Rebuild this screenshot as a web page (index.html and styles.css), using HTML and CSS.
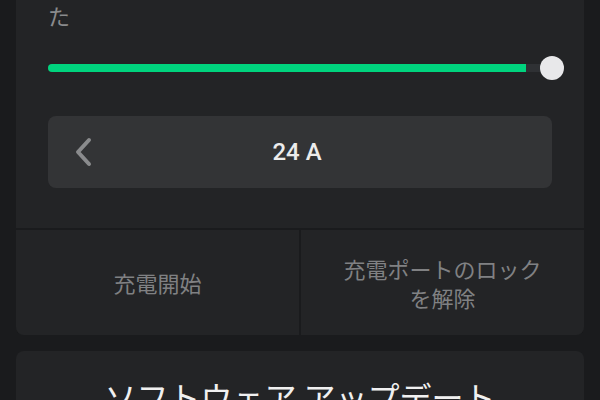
FILE: index.html
```html
<!DOCTYPE html>
<html>
	<head>
		<title>充電設定</title>
		<link rel="stylesheet" href="styles.css">
	</head>
	<body>
		<div class="card card-cut">
			<div class="card-body">
				<p class="note">た</p>
				<div class="slider">
					<div class="track">
						<div class="fill" style="width: 94.8%"></div>
					</div>
					<div class="knob"></div>
				</div>
				<div class="stepper">
					<svg class="chevron" width="18" height="30" viewBox="0 0 18 30">
						<path d="M15 3 L4 15 L15 27" fill="none" stroke="#8a8b8d" stroke-width="4" stroke-linecap="round" stroke-linejoin="round"/>
					</svg>
					<span class="amps">24 A</span>
				</div>
			</div>
			<div class="actions">
				<div class="action">充電開始</div>
				<div class="action">充電ポートのロック<br>を解除</div>
			</div>
		</div>
		<div class="card">
			<h2 class="title">ソフトウェア アップデート</h2>
		</div>
	</body>
</html>
```

FILE: styles.css
```css
body {
	margin: 0;
	padding: 0 16px;
	background: #1a1b1d;
	font-family: "Noto Sans CJK JP", "Noto Sans", sans-serif;
	overflow: hidden;
}
.card {
	background: #232426;
	border-radius: 8px;
	margin-bottom: 16px;
	overflow: hidden;
}
.card-cut {
	border-top-left-radius: 0;
	border-top-right-radius: 0;
}
.card-body {
	padding: 0 32px 40px;
}
.note {
	margin: 0;
	font-size: 22px;
	line-height: 30px;
	color: #8a8b8d;
}
.slider {
	position: relative;
	margin-top: 26px;
	height: 24px;
	display: flex;
	align-items: center;
}
.track {
	flex-grow: 1;
	height: 8px;
	background: #2f3134;
	border-radius: 4px 0 0 4px;
}
.fill {
	height: 100%;
	background: #00d47e;
	border-radius: 4px 0 0 4px;
}
.knob {
	position: absolute;
	right: -12px;
	top: 0;
	width: 24px;
	height: 24px;
	border-radius: 50%;
	background: #e8e8ea;
}
.stepper {
	margin-top: 36px;
	height: 72px;
	background: #333436;
	border-radius: 8px;
	display: flex;
	align-items: center;
	padding: 0 26px;
}
.chevron {
	flex-shrink: 0;
}
.amps {
	flex-grow: 1;
	text-align: center;
	margin-right: 24px;
	font-family: Roboto, "Liberation Sans", sans-serif;
	font-weight: 500;
	font-size: 24px;
	color: #ececec;
}
.actions {
	display: grid;
	grid-template-columns: 1fr 1fr;
	gap: 2px;
	border-top: 2px solid #1a1b1d;
	background: #1a1b1d;
}
.action {
	background: #232426;
	height: 105px;
	display: flex;
	align-items: center;
	justify-content: center;
	text-align: center;
	font-size: 22px;
	line-height: 29px;
	color: #808183;
}
.title {
	margin: 0;
	padding-top: 23px;
	text-align: center;
	font-weight: 400;
	font-size: 32px;
	line-height: 45px;
	color: #f0f0f0;
}
```
